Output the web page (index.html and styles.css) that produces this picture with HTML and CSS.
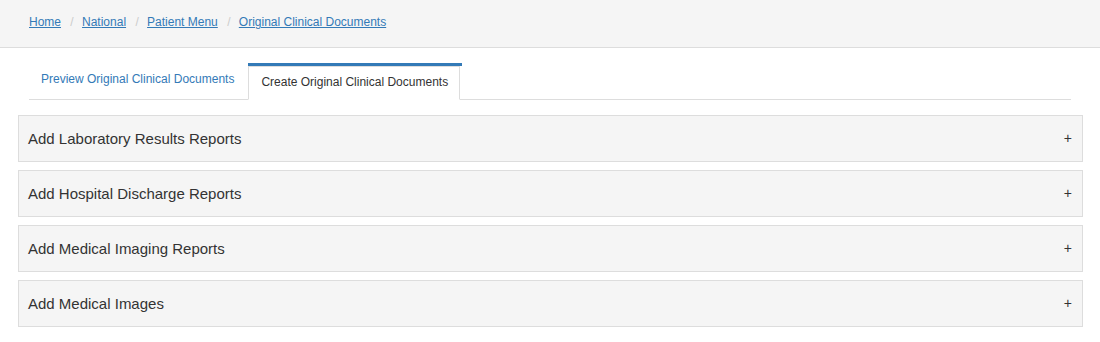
FILE: index.html
```html
<!DOCTYPE html>
<html lang="en">
<head>
<meta charset="utf-8">
<title>Original Clinical Documents</title>
<link rel="stylesheet" href="styles.css">
</head>
<body>
<header class="topbar">
  <ol class="breadcrumb">
    <li><a href="#">Home</a></li>
    <li><a href="#">National</a></li>
    <li><a href="#">Patient Menu</a></li>
    <li><a href="#">Original Clinical Documents</a></li>
  </ol>
</header>
<div class="tabs-wrap">
  <ul class="tabs">
    <li class="tab"><a href="#">Preview Original Clinical Documents</a></li>
    <li class="tab active"><a href="#">Create Original Clinical Documents</a></li>
  </ul>
</div>
<div class="panels">
  <div class="panel"><span class="panel-title">Add Laboratory Results Reports</span><span class="panel-toggle">+</span></div>
  <div class="panel"><span class="panel-title">Add Hospital Discharge Reports</span><span class="panel-toggle">+</span></div>
  <div class="panel"><span class="panel-title">Add Medical Imaging Reports</span><span class="panel-toggle">+</span></div>
  <div class="panel"><span class="panel-title">Add Medical Images</span><span class="panel-toggle">+</span></div>
</div>
</body>
</html>
```

FILE: styles.css
```css
* { box-sizing: border-box; }
html, body {
  margin: 0;
  padding: 0;
  background: #fff;
  font-family: "Liberation Sans", Arial, sans-serif;
  font-size: 12px;
  line-height: 17px;
  color: #333;
}
a { color: #337ab7; }

.topbar {
  height: 48px;
  background: #f5f5f5;
  border-bottom: 1px solid #ddd;
  padding: 14px 29px 0;
}
.breadcrumb {
  list-style: none;
  margin: 0;
  padding: 0;
}
.breadcrumb li {
  display: inline-block;
}
.breadcrumb li + li::before {
  content: "/\00a0";
  padding: 0 5px 0 6px;
  color: #ccc;
}
.breadcrumb a { text-decoration: underline; }

.tabs-wrap {
  padding: 15px 29px 0;
}
.tabs {
  list-style: none;
  margin: 0;
  padding: 0;
  display: flex;
  align-items: flex-start;
  border-bottom: 1px solid #ddd;
}
.tab { margin-bottom: -1px; }
.tab a {
  display: block;
  margin-right: 2px;
  padding: 7px 11px 8px 11px;
  border: 1px solid transparent;
  text-decoration: none;
  color: #337ab7;
}
.tab.active {
  border-top: 3px solid #337ab7;
}
.tab.active a {
  padding-left: 12px;
  color: #333;
  background: #fff;
  border-color: #ddd;
  border-bottom-color: #fff;
}

.panels {
  padding: 15px 17px 0 18px;
}
.panel {
  height: 47px;
  margin-bottom: 8px;
  background: #f5f5f5;
  border: 1px solid #ddd;
  display: flex;
  align-items: center;
  justify-content: space-between;
  padding: 0 10px 0 9px;
}
.panel-title {
  font-size: 15px;
  color: #333;
}
.panel-toggle {
  font-size: 14px;
  color: #333;
}
```
